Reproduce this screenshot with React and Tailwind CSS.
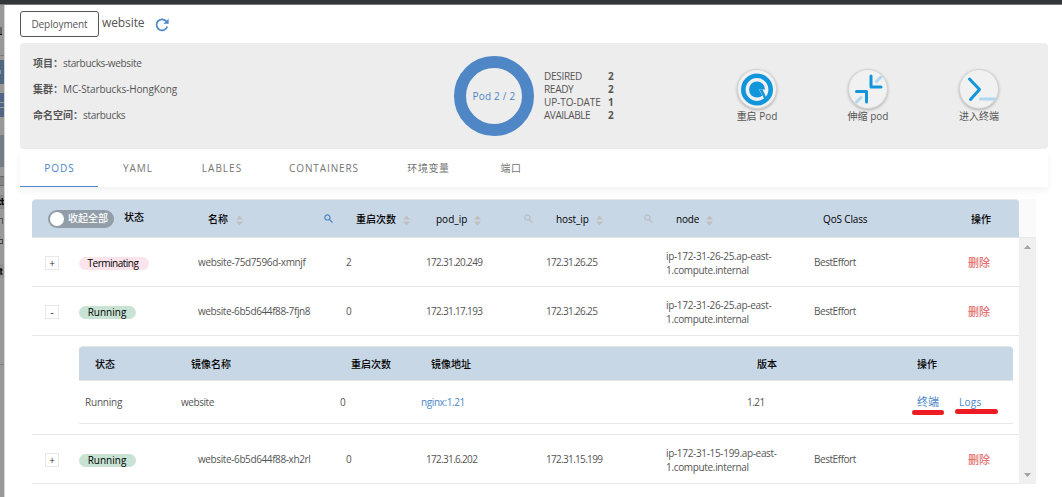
const FONT = 'font-["Open_Sans","Noto_Sans_CJK_SC",sans-serif]';

function Sort({ className }) {
  return (
    <svg className={className} width="7" height="11" viewBox="0 0 7 11" fill="#bfbfbf">
      <path d="M3.5 0.5 7 4.5H0zM3.5 10.5 0 6.5h7z" />
    </svg>
  );
}

function Search({ className }) {
  return (
    <svg className={className} width="9" height="9" viewBox="0 0 9 9" fill="none" stroke="currentColor" strokeWidth="1.2">
      <circle cx="3.4" cy="3.4" r="2.6" />
      <path d="M5.3 5.3 8.5 8.5" />
    </svg>
  );
}

function Sidebar() {
  return (
    <div className="h-[493px] w-[4px] shrink-0 bg-[#9b9997]">
      <div className="pt-[22px]"><div className="h-[8px] w-[2px] border-b border-black bg-[#666]" /></div>
      <div className="mt-[20px] h-px bg-[#7d7b7a]" />
      <div className="mt-[4px] flex h-[24px] items-center bg-[#4f6785]">
        <div className="h-[4px] w-px bg-[#999]" />
      </div>
      <div className="mt-[9px] h-[24px] bg-[#4f6785] pt-[9px]">
        <div className="h-[6px] border-y border-[#9b9997]" />
      </div>
      <div className="mt-[18px] h-[32px] bg-[#737d85]" />
      <div className="mt-[9px] h-[10px] w-[4px] border-y border-[#666] bg-[#858381]" />
      <div className="mt-[9px] h-[14px] bg-[#8a8887]">
        <svg width="4" height="14" viewBox="0 0 4 14" fill="none" stroke="#111" strokeWidth="1.4"><path d="M0 5.500h4M2.200 3v6.300H4M0 9.300h1" /></svg>
      </div>
      <div className="mt-[9px] h-[6px] w-[3px] border-t border-r border-[#555]" />
      <div className="mt-[15px] h-[5px] w-[3px] border border-l-0 border-[#444]" />
      <div className="mt-[20px] h-[14px] bg-[#918f91]">
        <svg width="4" height="14" viewBox="0 0 4 14" fill="none" stroke="#111" strokeWidth="1.4"><path d="M0 6h2.500M1 4v6h1.500" /></svg>
      </div>
      <div className="mt-[86px] h-px bg-[#828080]" />
    </div>
  );
}

function Meta({ label, value, tracking, labelWidth }) {
  return (
    <div className="flex h-[26px] items-center">
      <span className={`${labelWidth} shrink-0 font-semibold`}>{label}</span>
      <span className={tracking}>{value}</span>
    </div>
  );
}

function Stat({ label, value, tracking }) {
  return (
    <div className="flex h-[13px] items-center">
      <span className={`w-[64px] ${tracking}`}>{label}</span>
      <b>{value}</b>
    </div>
  );
}

function Action({ label, children, className }) {
  return (
    <div className={`flex w-[60px] flex-col items-center ${className}`}>
      <div className="h-[40px] w-[40px] rounded-full border border-[#d4d4d4] bg-[#f1f1f1] shadow-[0_1px_3px_rgba(0,0,0,0.25)]">
        <svg width="38" height="38" viewBox="0 0 38 38" fill="none">{children}</svg>
      </div>
      <span className="h-[14px] whitespace-nowrap leading-[14px]">{label}</span>
    </div>
  );
}

const cols = "grid grid-cols-[157px_148px_80px_120px_120px_148px_148px_66px]";

function PodRow({ open, status, name, nameTracking, restarts, ip, host, node, nodeTracking = "tracking-[-0.33px]" }) {
  const running = status === "Running";
  return (
    <div className={`${cols} h-[49px] items-center border-b border-[#e8e8e8]`}>
      <div className="flex items-center pl-[13px] pt-[2px]">
        <span className="flex h-[14px] w-[14px] items-center justify-center border border-[#e8e8e8] leading-none text-[#333]">{open ? "-" : "+"}</span>
        <span className={`ml-[20px] flex h-[13px] items-center justify-center rounded-full pt-px text-black ${running ? "w-[57px] bg-[#c8e3d4] pr-px" : "w-[70px] bg-[#fce4ec] pr-[2px] tracking-[-0.5px]"}`}>
          {status}
        </span>
      </div>
      <span className={`pl-[9px] pt-px ${nameTracking}`}>{name}</span>
      <span className="pl-[9px] pt-px">{restarts}</span>
      <span className="pl-[9px] pt-px tracking-[-0.68px]">{ip}</span>
      <span className="pl-[9px] pt-px tracking-[-0.68px]">{host}</span>
      <span className={`whitespace-nowrap pl-[9px] pt-[2px] leading-[14px] ${nodeTracking}`}>
        {node}<br /><span className="tracking-[-0.33px]">1.compute.internal</span>
      </span>
      <span className="pl-[9px] pt-px tracking-[-0.45px]">BestEffort</span>
      <span className="pl-[15px] pt-[3px] text-[11px] font-medium text-[#e57373]">删除</span>
    </div>
  );
}

export default function App() {
  return (
    <div className={`h-[497px] w-[1062px] overflow-hidden bg-white text-[10px] text-[#555] ${FONT}`}>
      <div className="h-[5px] border-b border-[#77777a] bg-[#35363a]" />
      <div className="flex">
        <Sidebar />
        <div className="h-[492px] w-px shrink-0 bg-[#d5d5d5]" />
        <main className="w-[1057px] pl-[15px]">
          <div className="flex h-[38px] pt-[6px]">
            <div className="flex h-[26px] w-[79px] items-center justify-center rounded-[3px] border border-[#555] pt-px tracking-[-0.1px]">Deployment</div>
            <span className="ml-[3px] w-[53px] text-[12px] leading-[24px] tracking-[-0.1px]">website</span>
            <svg className="mt-[7px]" width="14" height="14" viewBox="0 0 14 14" fill="none" stroke="#4a86c8" strokeWidth="1.7">
              <path d="M11.2 3.2A5.500 5.500 0 1 0 12.300 8.500" />
              <path d="M13.6 0.8v5H8.4z" fill="#4a86c8" stroke="none" />
            </svg>
          </div>

          <section className="flex h-[106px] w-[1028px] rounded-[4px] bg-[#ededed]">
            <div className="w-[434px] pl-[13px] pt-[7px]">
              <Meta label="项目：" value="starbucks-website" labelWidth="w-[30px]" tracking="tracking-[-0.34px]" />
              <Meta label="集群：" value="MC-Starbucks-HongKong" labelWidth="w-[30px]" tracking="tracking-[-0.1px]" />
              <Meta label="命名空间：" value="starbucks" labelWidth="w-[50px]" tracking="tracking-[-0.3px]" />
            </div>
            <div className="mt-[13px] flex h-[80px] w-[80px] items-center justify-center rounded-full border-[12px] border-[#4f86c6]">
              <span className="whitespace-nowrap pt-px tracking-[0.2px] text-[#4a86c8]">Pod 2 / 2</span>
            </div>
            <div className="ml-[10px] mt-[27px] w-[173px]">
              <Stat label="DESIRED" value="2" tracking="tracking-[-0.3px]" />
              <Stat label="READY" value="2" tracking="tracking-[-0.3px]" />
              <Stat label="UP-TO-DATE" value="1" tracking="tracking-[-0.1px]" />
              <Stat label="AVAILABLE" value="2" tracking="tracking-[-0.45px]" />
            </div>
            <div className="flex pt-[26px]">
              <Action label="重启 Pod" className="ml-[10px]">
                <circle cx="19" cy="19.5" r="13.700" stroke="#1296db" strokeWidth="4.600" />
                <circle cx="19" cy="19.5" r="8" fill="#1296db" />
                <path d="M21 19.500h7v9h-2z" fill="#f1f1f1" />
                <path d="m21.500 19.500 5.500 11 2-1.500-4.500-9.500z" fill="#1296db" />
              </Action>
              <Action label="伸缩 pod" className="ml-[51px]">
                <g strokeWidth="3" strokeLinecap="round" strokeLinejoin="round">
                  <path d="M22 6v11h10M7.5 21.5H17.500V32" stroke="#1296db" />
                  <path d="m27.500 11.500 4.500-4.500M7.500 32l4.500-4.500" stroke="#add8ee" />
                </g>
              </Action>
              <Action label="进入终端" className="ml-[51px]">
                <path d="m9.500 9 10 10.500-9 10" stroke="#1296db" strokeWidth="3" strokeLinecap="round" strokeLinejoin="round" />
                <path d="M20.500 29h14" stroke="#add8ee" strokeWidth="3" strokeLinecap="round" />
              </Action>
            </div>
          </section>

          <nav className="flex h-[38px] w-[1028px] bg-white tracking-[1px] text-[#757575] shadow-[0_4px_8px_rgba(0,0,0,0.05)]">
            <span className="flex w-[78px] items-center justify-center border-b border-[#4a86c8] pl-px pt-[2px] text-[#4a86c8]">PODS</span>
            <span className="flex w-[79px] items-center justify-center pl-px pt-px">YAML</span>
            <span className="flex w-[89px] items-center justify-center pl-px pt-px">LABLES</span>
            <span className="flex w-[115px] items-center justify-center pl-px pt-px tracking-[0.9px]">CONTAINERS</span>
            <span className="flex w-[95px] items-center justify-center pt-px tracking-[0.6px]">环境变量</span>
            <span className="flex w-[70px] items-center justify-center pt-px tracking-[0.6px]">端口</span>
          </nav>

          <div className="ml-[12px] mt-[12px] flex h-[285px] w-[1004px]">
            <div className="w-[987px]">
              <div className={`${cols} h-[39px] items-center rounded-t-[4px] border-y border-[#e3e7ea] bg-[#c8d7e6] pt-[2px] font-medium text-black`}>
                <div className="flex items-center pb-[2px] pl-[16px]">
                  <span className="flex h-[18px] w-[66px] items-center rounded-full bg-[#919da8] pl-[2px] text-white">
                    <span className="mr-[4px] h-[14px] w-[14px] rounded-full bg-white" />收起全部
                  </span>
                  <span className="ml-[10px] pb-[2px]">状态</span>
                </div>
                <div className="flex items-center pl-[19px]">
                  <span className="w-[28px]">名称</span><Sort className="mt-px" /><Search className="-mt-[2px] ml-[81px] text-[#4a86c8]" />
                </div>
                <div className="flex items-center whitespace-nowrap pl-[19px]">
                  <span className="w-[47px] shrink-0">重启次数</span><Sort className="mt-px shrink-0" />
                </div>
                <div className="flex items-center pl-[19px]">
                  <span className="w-[38px]">pod_ip</span><Sort className="mt-px" /><Search className="-mt-[2px] ml-[43px] text-[#b9bdc1]" />
                </div>
                <div className="flex items-center pl-[19px]">
                  <span className="w-[40px] tracking-[-0.1px]">host_ip</span><Sort className="mt-px" /><Search className="-mt-[2px] ml-[41px] text-[#b9bdc1]" />
                </div>
                <div className="flex items-center pl-[19px]">
                  <span className="w-[30px] tracking-[-0.2px]">node</span><Sort className="mt-px" />
                </div>
                <span className="pl-[18px] tracking-[-0.15px]">QoS Class</span>
                <span className="pl-[18px]">操作</span>
              </div>
              <PodRow status="Terminating" name="website-75d7596d-xmnjf" nameTracking="tracking-[-0.36px]" restarts="2" ip="172.31.20.249" host="172.31.26.25" node="ip-172-31-26-25.ap-east-" />
              <PodRow open status="Running" name="website-6b5d644f88-7fjn8" nameTracking="tracking-[-0.39px]" restarts="0" ip="172.31.17.193" host="172.31.26.25" node="ip-172-31-26-25.ap-east-" />
              <div className="h-[99px] border-b border-[#e8e8e8] pl-[47px] pt-[10px]">
                <div className="w-[934px]">
                  <div className="grid h-[35px] grid-cols-[96px_160px_80px_326px_160px_1fr] items-center rounded-t-[4px] border-y border-[#e3e7ea] bg-[#c8d7e6] pl-[16px] pt-px font-medium text-black">
                    <span>状态</span><span>镜像名称</span><span>重启次数</span><span>镜像地址</span><span>版本</span><span>操作</span>
                  </div>
                  <div className="grid h-[43px] grid-cols-[96px_159px_81px_326px_170px_42px_1fr] items-center border-b border-[#e8e8e8] pl-[6px] pt-px">
                    <span className="tracking-[-0.2px]">Running</span><span className="tracking-[-0.45px]">website</span><span>0</span>
                    <span className="tracking-[-0.4px] text-[#4a86c8]">nginx:1.21</span><span className="tracking-[-0.55px]">1.21</span>
                    <span className="relative text-[11px] text-[#4a86c8]">终端
                      <span className="absolute -left-[5px] top-[16px] h-[5px] w-[32px] rounded-full bg-[#ed1c24]" />
                    </span>
                    <span className="relative tracking-[0.3px] text-[#4a86c8]">Logs
                      <span className="absolute -left-[4px] top-[14px] h-[5px] w-[43px] rounded-full bg-[#ed1c24]" />
                    </span>
                  </div>
                </div>
              </div>
              <PodRow status="Running" name="website-6b5d644f88-xh2rl" nameTracking="tracking-[-0.39px]" restarts="0" ip="172.31.6.202" host="172.31.15.199" node="ip-172-31-15-199.ap-east-" />
            </div>
            <div className="w-[17px]">
              <div className="h-[39px] border-b border-[#e8e8e8] bg-[#fafafa]" />
              <div className="flex h-[246px] flex-col items-center justify-between bg-[#f0f0f0] py-[7px]">
                <svg width="7" height="4" viewBox="0 0 7 4" fill="#a3a3a3"><path d="M3.500 0 7 4H0z" /></svg>
                <svg width="7" height="4" viewBox="0 0 7 4" fill="#a3a3a3"><path d="M3.500 4 7 0H0z" /></svg>
              </div>
            </div>
          </div>
        </main>
      </div>
    </div>
  );
}
